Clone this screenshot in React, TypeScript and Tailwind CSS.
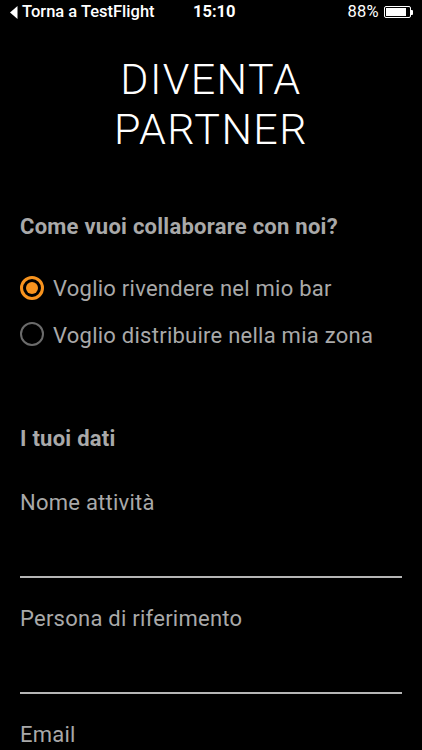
import React from "react";

function Radio({ checked }: { checked: boolean }) {
  return checked ? (
    <div className="w-[24px] h-[24px] rounded-full border-[3px] border-[#f7931e] flex items-center justify-center shrink-0">
      <div className="w-[12px] h-[12px] rounded-full bg-[#f7931e]" />
    </div>
  ) : (
    <div className="w-[24px] h-[24px] rounded-full border-[2.5px] border-[#6b6b6b] shrink-0" />
  );
}

function Field({ label }: { label: string }) {
  return (
    <div className="flex flex-col">
      <div className="text-[22px] leading-[24px] tracking-[0.25px] text-[#a9a9a9]">{label}</div>
      <div className="h-[61px]" />
      <div className="h-[2px] bg-[#b5b5b5]" />
    </div>
  );
}

export default function App() {
  return (
    <div
      className="w-[422px] h-[750px] bg-black overflow-hidden flex flex-col"
      style={{ fontFamily: "Roboto, 'Noto Sans', sans-serif" }}
    >
      {/* status bar */}
      <div className="h-[24px] relative flex items-center text-white text-[16.5px] font-medium">
        <div className="flex items-center pl-[10px]">
          <svg width="8" height="13" viewBox="0 0 8 13" className="mr-[4px]">
            <path d="M7.5 0 L0 6.5 L7.5 13 Z" fill="white" />
          </svg>
          <span>Torna a TestFlight</span>
        </div>
        <div className="absolute left-[193px] font-bold">15:10</div>
        <div className="ml-auto flex items-center pr-[9px]">
          <span className="font-normal mr-[5px] tracking-[0.3px]">88%</span>
          <div className="w-[27px] h-[12px] border border-white rounded-[2px] p-[1px]">
            <div className="w-[88%] h-full bg-white" />
          </div>
          <div className="w-[2px] h-[5px] bg-white rounded-r-[1px]" />
        </div>
      </div>

      {/* title */}
      <div className="mt-[30px] text-center text-white text-[43px] leading-[50px] font-light tracking-[1.4px]">
        <div>DIVENTA</div>
        <div>PARTNER</div>
      </div>

      <div className="px-[20px] flex flex-col">
        <div className="mt-[61px] text-[22px] leading-[24px] tracking-[0.25px] font-bold text-[#a9a9a9]">
          Come vuoi collaborare con noi?
        </div>

        <div className="mt-[24px] flex flex-col">
          <div className="h-[47px] flex items-start">
            <div className="mt-[13px]">
              <Radio checked />
            </div>
            <div className="ml-[9px] mt-[14px] text-[22px] leading-[24px] tracking-[0.25px] text-[#a9a9a9]">
              Voglio rivendere nel mio bar
            </div>
          </div>
          <div className="h-[47px] flex items-start">
            <div className="mt-[12px]">
              <Radio checked={false} />
            </div>
            <div className="ml-[9px] mt-[14px] text-[22px] leading-[24px] tracking-[0.25px] text-[#a9a9a9]">
              Voglio distribuire nella mia zona
            </div>
          </div>
        </div>

        <div className="mt-[70px] text-[22px] leading-[24px] tracking-[0.25px] font-bold text-[#a9a9a9]">
          I tuoi dati
        </div>

        <div className="mt-[40px] flex flex-col gap-[29px]">
          <Field label="Nome attività" />
          <Field label="Persona di riferimento" />
          <Field label="Email" />
        </div>
      </div>
    </div>
  );
}
